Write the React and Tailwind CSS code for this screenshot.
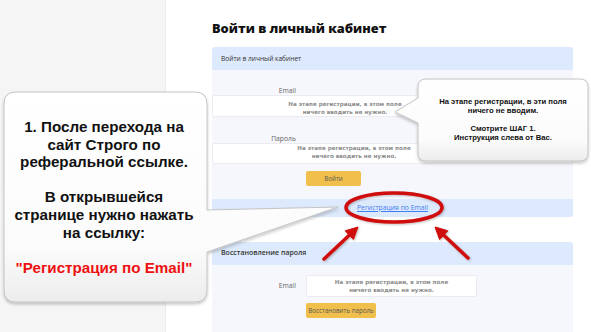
import React from "react";

const hint = "На этапе регистрации, в этом поле";
const hint2 = "ничего вводить не нужно.";

function Hint({ className = "" }) {
  return (
    <div
      className={`text-center text-[5.6px] font-bold leading-[8px] text-[#8c8c8c] ${className}`}
      style={{ fontFamily: '"DejaVu Sans", sans-serif' }}
    >
      <div>{hint}</div>
      <div>{hint2}</div>
    </div>
  );
}

const Bubbles = () => (
  <svg
    className="pointer-events-none absolute left-0 top-0"
    width="591"
    height="332"
    viewBox="0 0 591 332"
  >
    <defs>
      <linearGradient id="bub" x1="0" y1="0" x2="0" y2="1">
        <stop offset="0" stopColor="#ffffff" />
        <stop offset="0.75" stopColor="#fbfbfb" />
        <stop offset="1" stopColor="#ececec" />
      </linearGradient>
      <filter id="sh" x="-10%" y="-10%" width="120%" height="130%">
        <feDropShadow dx="0" dy="2" stdDeviation="1.6" floodColor="#000" floodOpacity="0.22" />
      </filter>
      <filter id="ash" x="-20%" y="-20%" width="140%" height="140%">
        <feDropShadow dx="1" dy="1" stdDeviation="0.8" floodColor="#000" floodOpacity="0.25" />
      </filter>
    </defs>

    {/* left bubble */}
    <path
      d="M16,92 H195 Q207,92 207,104 V210 L338,207 L207,252 V290 Q207,302 195,302 H16 Q4,302 4,290 V104 Q4,92 16,92 Z"
      fill="url(#bub)"
      stroke="#c4c4c4"
      strokeWidth="1"
      filter="url(#sh)"
    />

    {/* right bubble */}
    <path
      d="M426,79 H580 Q588,79 588,87 V153 Q588,161 580,161 H426 Q418,161 418,153 V123 L395,112 L418,98 V87 Q418,79 426,79 Z"
      fill="url(#bub)"
      stroke="#c4c4c4"
      strokeWidth="1"
      filter="url(#sh)"
    />

    {/* red ellipse */}
    <ellipse cx="394" cy="207.5" rx="48" ry="14.5" fill="none" stroke="#cf0a0a" strokeWidth="3.5" filter="url(#ash)" />

    {/* arrows */}
    <g filter="url(#ash)" fill="#cf0a0a" stroke="#cf0a0a">
      <line x1="324" y1="259" x2="350" y2="234.5" strokeWidth="3.5" strokeLinecap="round" />
      <polygon points="358,227 353.4,239.6 345.2,230.8" strokeWidth="1" strokeLinejoin="round" />
      <line x1="468" y1="258" x2="443" y2="234.5" strokeWidth="3.5" strokeLinecap="round" />
      <polygon points="435,227 447.85,230.8 439.65,239.6" strokeWidth="1" strokeLinejoin="round" />
    </g>
  </svg>
);

export default function App() {
  return (
    <div
      className="relative flex h-[332px] w-[591px] overflow-hidden bg-white"
      style={{ fontFamily: '"Open Sans", sans-serif' }}
    >
      {/* sidebar */}
      <aside className="w-[166px] shrink-0 border-r border-[#ebebeb] bg-[#f5f5f5]" />

      {/* main */}
      <main className="flex-1 pl-[46px] pr-[18px] pt-[18px]">
        <h1 className="text-[12.8px] font-extrabold leading-[20px] text-[#111]">
          Войти в личный кабинет
        </h1>

        <section className="mt-[9px] rounded-[3px] bg-[#f6f7fc]">
          <div className="flex h-[23px] items-center rounded-t-[3px] bg-[#dde9fc] px-[9px] text-[6.6px] text-[#333]">
            Войти в личный кабинет
          </div>
          <div className="pt-[17px]">
            <div className="w-[84px] text-right text-[6.8px] leading-[8px] text-[#666]">Email</div>
            <div className="h-[22px] rounded-[2px] border border-[#ececf0] bg-white pt-[4px]">
              <Hint className="w-[264px]" />
            </div>
            <div className="mt-[18px] w-[84px] text-right text-[6.8px] leading-[8px] text-[#666]">Пароль</div>
            <div className="h-[21px] rounded-[2px] border border-[#ececf0] bg-white">
              <Hint className="w-[282px]" />
            </div>
            <button className="ml-[94px] mt-[7px] flex h-[15px] w-[55px] items-center justify-center rounded-[2px] bg-[#f1c04c] text-[6.2px] text-[#555]">
              Войти
            </button>
            <div className="mt-[13px] flex h-[18px] items-center justify-center rounded-b-[3px] bg-[#dde9fc]">
              <a className="text-[6.8px] text-[#3d7ef0] underline">Регистрация по Email</a>
            </div>
          </div>
        </section>

        <section className="mt-[25px] rounded-[3px] bg-[#f6f7fc] pb-[20px]">
          <div className="flex h-[23px] items-center rounded-t-[3px] bg-[#dde9fc] px-[9px] text-[7px] font-semibold text-[#333]">
            Восстановление пароля
          </div>
          <div className="flex items-center gap-[10px] pt-[10px]">
            <div className="w-[84px] text-right text-[6.8px] text-[#666]">Email</div>
            <div className="flex h-[22px] w-[171px] items-center justify-center rounded-[2px] border border-[#ececf0] bg-white">
              <Hint className="leading-[7.5px]" />
            </div>
          </div>
          <button className="ml-[94px] mt-[6px] flex h-[15px] w-[70px] items-center justify-center rounded-[2px] bg-[#f1c04c] text-[6.2px] text-[#555]">
            Восстановить пароль
          </button>
        </section>
      </main>

      <Bubbles />

      {/* left bubble text */}
      <div
        className="absolute left-[2px] top-[118px] w-[204px] text-center text-[15.2px] font-bold leading-[17.6px] text-[#111]"
        style={{ fontFamily: '"Liberation Sans", Arial, sans-serif' }}
      >
        <div>1. После перехода на</div>
        <div>сайт Строго по</div>
        <div>реферальной ссылке.</div>
        <div>&nbsp;</div>
        <div>В открывшейся</div>
        <div>странице нужно нажать</div>
        <div>на ссылку:</div>
        <div>&nbsp;</div>
        <div className="text-[#ee1111]">"Регистрация по Email"</div>
      </div>

      {/* right bubble text */}
      <div
        className="absolute left-[418px] top-[96.5px] w-[170px] text-center text-[7.7px] font-bold leading-[9px] text-[#111]"
        style={{ fontFamily: '"Liberation Sans", Arial, sans-serif' }}
      >
        <div>На этапе регистрации, в эти поля</div>
        <div>ничего не вводим.</div>
        <div>&nbsp;</div>
        <div>Смотрите ШАГ 1.</div>
        <div>Инструкция слева от Вас.</div>
      </div>
    </div>
  );
}
